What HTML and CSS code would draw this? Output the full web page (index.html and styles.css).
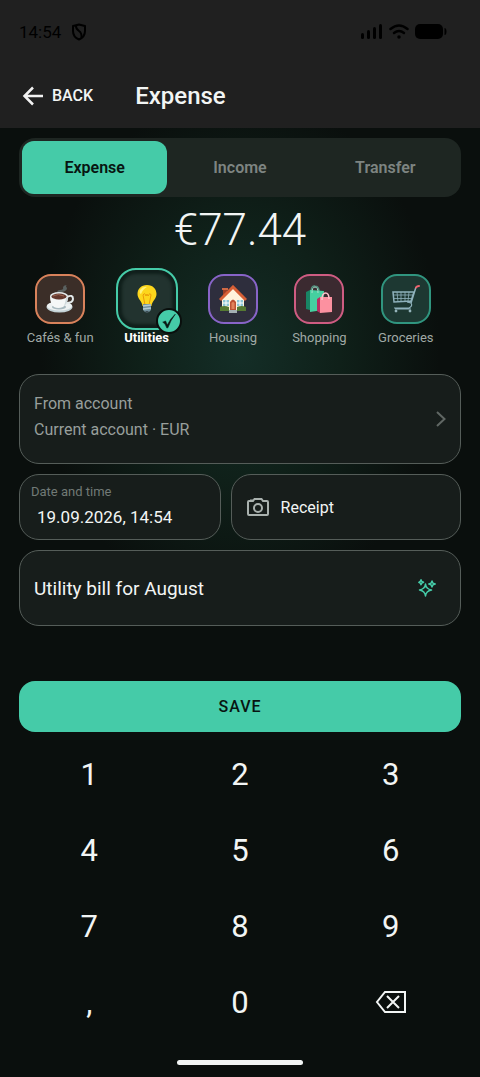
FILE: index.html
```
<!DOCTYPE html>
<html lang="en">
<head>
    <meta charset="UTF-8">
    <meta name="viewport" content="width=device-width, initial-scale=1.0">
    <title>Expense</title>
    <link rel="stylesheet" href="styles.css">
</head>
<body>
    <header class="top">
        <div class="status">
            <span class="time">14:54</span>
            <svg width="16" height="18" viewBox="0 0 16 18" fill="none" stroke="#000" stroke-width="2">
                <path d="M8 1.5 L14 3 V8 Q14 14 8 16.5 Q2 14 2 8 V3 Z" stroke-linejoin="round"/>
                <path d="M5 3 Q5 6 8 8 Q11 10 10.500 15"/>
            </svg>
            <div class="signal">
                <svg width="22" height="16" viewBox="0 0 22 16">
                    <rect x="0" y="9" width="3" height="6" rx="1.500"/>
                    <rect x="6" y="6" width="3" height="9" rx="1.500"/>
                    <rect x="12" y="3" width="3" height="12" rx="1.500"/>
                    <rect x="18" y="0" width="3" height="15" rx="1.500"/>
                </svg>
                <svg width="20" height="16" viewBox="0 0 20 16" fill="none" stroke="#000" stroke-width="2.500" stroke-linecap="round">
                    <path d="M1.500 5 Q10 -2 18.500 5"/>
                    <path d="M5 9 Q10 5 15 9"/>
                    <circle cx="10" cy="13" r="1" fill="#000" stroke-width="1.500"/>
                </svg>
                <svg width="32" height="16" viewBox="0 0 32 16">
                    <rect x="0" y="0" width="28" height="15" rx="5"/>
                    <path d="M29.500 4 Q31.500 4 31.500 7.500 Q31.500 11 29.500 11 Z"/>
                </svg>
            </div>
        </div>
        <div class="bar">
            <button class="back">
                <svg width="22" height="20" viewBox="0 0 22 20" fill="none" stroke="#f2f2f2" stroke-width="2.500">
                    <path d="M21 10 H2.500 M11 1.500 L2.500 10 L11 18.500"/>
                </svg>
                BACK
            </button>
            <h1>Expense</h1>
        </div>
    </header>

    <main class="page">
        <div class="tabs">
            <button class="tab active">Expense</button>
            <button class="tab">Income</button>
            <button class="tab">Transfer</button>
        </div>

        <div class="amount">€77.44</div>

        <div class="categories">
            <button class="category">
                <span class="tile orange">
                    <svg width="28" height="28" viewBox="0 0 28 28">
                        <path d="M11 8 Q11 5 14 5 Q18 5 17 2 Q18 0 21 0 Q19 1 21 3 Q21 6 16 7 Q13 7 13 9 Z" fill="#59605f"/>
                        <ellipse cx="13.500" cy="22" rx="13" ry="5.500" fill="#c4d3d7"/>
                        <ellipse cx="13.500" cy="21" rx="12.500" ry="4.500" fill="#edf1f2"/>
                        <ellipse cx="13" cy="22" rx="7" ry="2.500" fill="#a8b9bf"/>
                        <path d="M21 12 Q27 9 27 14 Q27 18 20 18" fill="none" stroke="#e4eaeb" stroke-width="2"/>
                        <path d="M4 11 Q4 19 8 22 Q12 24 17 22 Q22 19 22 11 Z" fill="#f5f7f7"/>
                        <path d="M17 22 Q22 19 22 11 L20 13 Q19 20 17 22" fill="#cfd9dc"/>
                        <ellipse cx="13" cy="11" rx="9" ry="4" fill="#e2e8e9"/>
                        <ellipse cx="13" cy="11.500" rx="7.500" ry="3" fill="#63382e"/>
                        <path d="M7 11 Q12 8 18 11" fill="none" stroke="#9b6552"/>
                    </svg>
                </span>
                <span class="name">Cafés &amp; fun</span>
            </button>
            <button class="category selected">
                <span class="tile">
                    <svg width="28" height="28" viewBox="0 0 28 28">
                        <path d="M14 0 C8 0 4.500 4 4.500 9 C4.500 14 9 16 9.500 21 H18.500 C19 16 23.500 14 23.500 9 C23.500 4 20 0 14 0" fill="#fdd61c"/>
                        <path d="M7 5 Q10 1 14 2 Q10 4 8 9 Q6 8 7 5" fill="#fff27a"/>
                        <path d="M12 20 L10 10 Q12 7 13 11 Q14 7 15 11 Q17 7 18 10 L16 20" fill="none" stroke="#eb9a09"/>
                        <path d="M10 19 H18 V25 Q14 30 10 25 Z" fill="#71909c"/>
                        <path d="M10 21 L18 20 M10 24 L18 23" stroke="#b5cbd3" stroke-width="1.500"/>
                        <path d="M12 26 H16 L14 28 Z" fill="#3c4c52"/>
                    </svg>
                    <span class="check">
                        <svg width="16" height="16" viewBox="0 0 14 14">
                            <path d="M1.500 8 L4 7 L5.500 10.500 Q8 5 12.500 1 Q8.500 6 6 13 H5 Q4 9 1.500 8" fill="#081511" stroke="#081511" stroke-width=".5"/>
                        </svg>
                    </span>
                </span>
                <span class="name">Utilities</span>
            </button>
            <button class="category">
                <span class="tile purple">
                    <svg width="28" height="28" viewBox="0 0 28 28">
                        <path d="M4 4 H8 V12 H4 Z" fill="#9b3d27"/>
                        <path d="M3 3 H9 V5 H3 Z" fill="#cf6946"/>
                        <path d="M3 14 L14 3 L25 14 V25 H3 Z" fill="#fff3dc"/>
                        <path d="M1 15 L14 2 L27 15" fill="none" stroke="#d75f36" stroke-width="3"/>
                        <path d="M4 15 H10 V21 H4 Z M18 15 H24 V21 H18 Z" fill="#8bc5d6"/>
                        <path d="M7 15 V21 M21 15 V21 M4 18 H10 M18 18 H24" stroke="#fff"/>
                        <path d="M11 25 V17 Q14 12 17 17 V25 Z" fill="#bd5132"/>
                        <path d="M12.500 24 V18 Q14 16 15.500 18 V24 Z" fill="#e1835b"/>
                        <path d="M1 22 Q5 20 10 22 V26 H1 Z M18 22 Q23 20 27 22 V26 H18 Z" fill="#557933"/>
                        <path d="M10 25 H18 V28 H10 Z" fill="#a4afb3"/>
                    </svg>
                </span>
                <span class="name">Housing</span>
            </button>
            <button class="category">
                <span class="tile pink">
                    <svg width="28" height="28" viewBox="0 0 28 28">
                        <path d="M6 8 Q6 0 10 1 Q14 1 14 7" fill="none" stroke="#549381" stroke-width="1.500"/>
                        <path d="M1 7 L5 5 V25 L1 24 Z" fill="#198565"/>
                        <path d="M5 5 L19 6 L18 25 L5 27 Z" fill="#45cfa0"/>
                        <path d="M7 8 Q7 2 10 2 Q13 2 13 8" fill="none" stroke="#a4dfcc"/>
                        <path d="M12 14 L15 12 V28 L12 26 Z" fill="#b92e61"/>
                        <path d="M15 12 H27 V27 L15 28 Z" fill="#fc91a0"/>
                        <path d="M17 15 Q17 8 20.500 8 Q24 8 24 14" fill="none" stroke="#ffc0cb" stroke-width="1.500"/>
                    </svg>
                </span>
                <span class="name">Shopping</span>
            </button>
            <button class="category">
                <span class="tile teal">
                    <svg width="28" height="28" viewBox="0 0 28 28" fill="none" stroke="#8fb2bc">
                        <path d="M24 2 L19 18 M1 7 H22 L19 16 L2 17 Z" stroke-width="1.500"/>
                        <path d="M1.500 10 H21 M2 13.500 H20 M5 7 L6 17 M9 7 V17 M13 7 V17 M17 7 L16 16" stroke-width=".8"/>
                        <path d="M15 17 L19 18 Q21 21 17 23 H2 M3 24 H19" stroke-width="1.200"/>
                        <path d="M24 2.500 Q25 1 27 1" stroke="#f0636f" stroke-width="2" stroke-linecap="round"/>
                        <circle cx="4" cy="26" r="1" fill="#dae7ea"/>
                        <circle cx="18" cy="26" r="1" fill="#dae7ea"/>
                    </svg>
                </span>
                <span class="name">Groceries</span>
            </button>
        </div>

        <div class="form">
            <button class="field account">
                <span class="account-text">
                    <span>From account</span>
                    <span>Current account · EUR</span>
                </span>
                <svg width="10" height="16" viewBox="0 0 10 16" fill="none" stroke="#606764" stroke-width="2">
                    <path d="M1 1 L8.500 8 L1 15"/>
                </svg>
            </button>

            <div class="row">
                <div class="field date">
                    <label for="date">Date and time</label>
                    <input type="text" id="date" value="19.09.2026, 14:54">
                </div>
                <button class="field receipt">
                    <svg width="22" height="18" viewBox="0 0 22 18" fill="none" stroke="#a9b1ae" stroke-width="2">
                        <path d="M1 4 Q1 3 2 3 H6 L7.500 1 H14.500 L16 3 H20 Q21 3 21 4 V16 Q21 17 20 17 H2 Q1 17 1 16 Z"/>
                        <circle cx="11" cy="10" r="4"/>
                        <path d="M3 2.500 H6"/>
                    </svg>
                    Receipt
                </button>
            </div>

            <div class="field note">
                <input type="text" aria-label="Note" value="Utility bill for August">
                <button class="magic" aria-label="Suggest">
                    <svg width="18" height="18" viewBox="0 0 18 18" fill="none" stroke="#45cba8" stroke-width="1.500" stroke-linejoin="round">
                        <path d="M7.500 5 Q8 10 13.500 11 Q8 12 7.500 17 Q7 12 1.500 11 Q7 10 7.500 5 Z"/>
                        <path d="M3 .8 L3.800 2.500 L5.500 3.300 L3.800 4 L3 5.800 L2.200 4 L.8 3.300 L2.200 2.500 Z"/>
                        <path d="M14 2 L15 4.200 L17.200 5 L15 5.800 L14 8 L13 5.800 L10.800 5 L13 4.200 Z"/>
                    </svg>
                </button>
            </div>
        </div>

        <button class="save">SAVE</button>

        <div class="keypad">
            <button class="key">1</button>
            <button class="key">2</button>
            <button class="key">3</button>
            <button class="key">4</button>
            <button class="key">5</button>
            <button class="key">6</button>
            <button class="key">7</button>
            <button class="key">8</button>
            <button class="key">9</button>
            <button class="key">,</button>
            <button class="key">0</button>
            <button class="key" aria-label="Delete">
                <svg width="32" height="22" viewBox="0 0 32 22" fill="none" stroke="#f2f5f4" stroke-width="2">
                    <path d="M10 1 H30 V21 H10 L2 11 Z"/>
                    <path d="M12 5 L24 17 M24 5 L12 17"/>
                </svg>
            </button>
        </div>
    </main>

    <div class="home-bar"></div>
</body>
</html>
```

FILE: styles.css
```
* {
    box-sizing: border-box;
}
body {
    margin: 0;
    min-height: 100vh;
    background-color: #0a0f0d;
    font-family: Roboto, sans-serif;
    color: #f2f5f4;
}
button, input {
    font-family: inherit;
    color: inherit;
    background: none;
    border: none;
    padding: 0;
    margin: 0;
}
button {
    cursor: pointer;
}
svg {
    display: block;
}

/* header */
.top {
    background-color: #202020;
    height: 128px;
}
.status {
    display: flex;
    align-items: center;
    gap: 10px;
    height: 63px;
    padding: 0 33px 0 19px;
    color: #000;
}
.time {
    font-size: 17px;
}
.signal {
    display: flex;
    gap: 6px;
    margin-left: auto;
}
.bar {
    display: flex;
    align-items: center;
    gap: 42px;
    height: 65px;
    padding: 0 22px;
}
.back {
    display: flex;
    align-items: center;
    gap: 8px;
    font-size: 16px;
    font-weight: 500;
}
h1 {
    margin: 0;
    font-size: 24px;
    font-weight: 500;
}

.page {
    padding: 10px 19px 0;
    background: radial-gradient(200px 260px at 50% 225px, #142e27 0%, #0f2019 50%, #0a0f0d 100%);
}

/* tabs */
.tabs {
    display: flex;
    height: 59px;
    padding: 3px;
    border-radius: 16px;
    background-color: #1e2622;
}
.tab {
    flex: 1;
    border-radius: 12px;
    font-size: 16px;
    font-weight: 600;
    color: #7d8481;
}
.tab.active {
    background-color: #45cba8;
    color: #081511;
}

.amount {
    height: 65px;
    line-height: 66px;
    text-align: center;
    font-size: 44px;
    font-weight: 300;
}

/* categories */
.categories {
    display: flex;
    margin: 0 -19px;
    padding: 6px 31px 0 17px;
}
.category {
    display: flex;
    flex: 1;
    flex-direction: column;
    align-items: center;
    font-size: 13px;
    line-height: 16px;
    color: #a0a9a5;
}
.tile {
    display: flex;
    align-items: center;
    justify-content: center;
    width: 50px;
    height: 50px;
    margin: 6px 0;
    border: 2px solid;
    border-radius: 16px;
}
.orange {
    border-color: #d9825b;
    background-color: #3b2e28;
}
.purple {
    border-color: #8864c8;
    background-color: #2e2e3d;
}
.pink {
    border-color: #cf5c82;
    background-color: #3b2a30;
}
.teal {
    border-color: #30957f;
    background-color: #1d3832;
}
.selected {
    font-weight: 700;
    color: #fff;
}
.selected .tile {
    position: relative;
    width: 62px;
    height: 62px;
    margin: 0;
    border: 2px solid #45cba8;
    border-radius: 20px;
    background-color: #22332f;
    box-shadow: inset 0 0 3px 4px #101f1b;
}
.check {
    position: absolute;
    right: -6px;
    bottom: -6px;
    display: flex;
    align-items: center;
    justify-content: center;
    width: 26px;
    height: 26px;
    border: 2px solid #0a0f0d;
    border-radius: 50%;
    background-color: #45cba8;
}

/* form */
.form {
    display: flex;
    flex-direction: column;
    gap: 10px;
    margin-top: 28px;
}
.field {
    border: 1px solid #555d59;
    border-radius: 20px;
    background-color: #171d1b;
}
.account {
    display: flex;
    align-items: center;
    justify-content: space-between;
    height: 90px;
    padding: 0 14px;
    font-size: 16px;
    line-height: 26px;
    color: #989f9c;
    text-align: left;
}
.account-text {
    display: flex;
    flex-direction: column;
    padding-bottom: 4px;
}
.row {
    display: grid;
    grid-template-columns: 7fr 8fr;
    gap: 10px;
}
.date {
    display: flex;
    flex-direction: column;
    min-width: 0;
    height: 66px;
    padding: 8px 11px;
}
.date label {
    font-size: 13px;
    line-height: 18px;
    color: #717a76;
}
.date input {
    width: 100%;
    padding-left: 6px;
    font-size: 17px;
    line-height: 32px;
}
.receipt {
    display: flex;
    align-items: center;
    gap: 12px;
    padding: 0 15px;
    font-size: 16px;
}
.note {
    display: flex;
    align-items: center;
    height: 76px;
    padding: 0 24px 0 14px;
}
.note input {
    flex: 1;
    min-width: 0;
    font-size: 19px;
}

.save {
    width: 100%;
    height: 51px;
    margin-top: 55px;
    border-radius: 16px;
    background-color: #45cba8;
    color: #081511;
    font-size: 16px;
    font-weight: 500;
    letter-spacing: 1px;
}

/* keypad */
.keypad {
    display: grid;
    grid-template-columns: repeat(3, 1fr);
    grid-auto-rows: 76px;
    margin: 4px -5px 0;
}
.key {
    display: flex;
    align-items: center;
    justify-content: center;
    font-size: 31px;
}
.home-bar {
    width: 126px;
    height: 5px;
    margin: 20px auto 0;
    border-radius: 3px;
    background-color: #f2f5f4;
}
```
